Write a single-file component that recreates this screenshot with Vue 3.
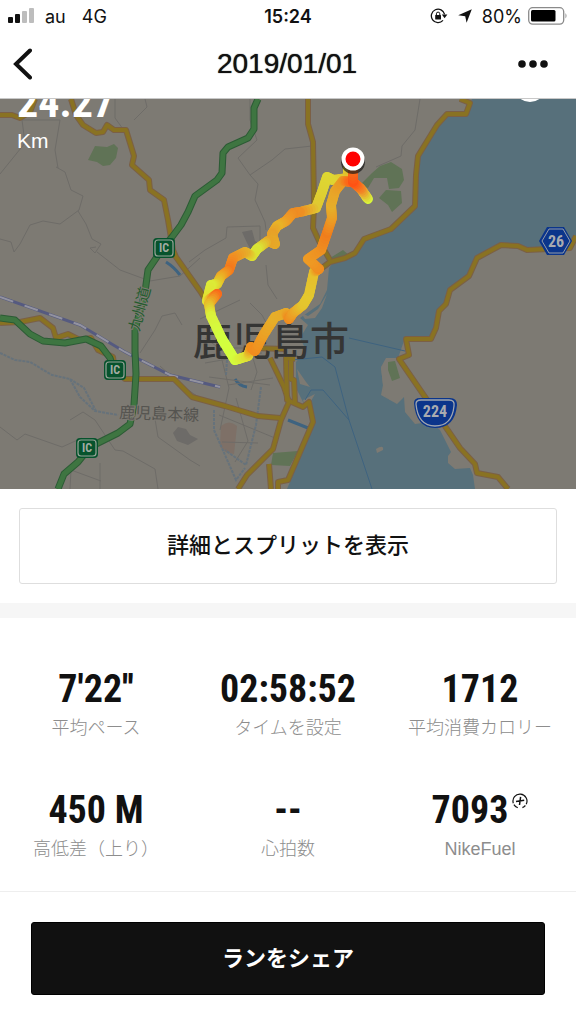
<template>
  <main class="app">
    <header class="header">
      <div class="status">
        <div class="status-left">
          <svg class="signal" viewBox="0 0 26 16" aria-hidden="true">
            <rect x="0" y="9" width="5" height="6" rx="1" fill="#111" />
            <rect x="7" y="6" width="5" height="9" rx="1" fill="#111" />
            <rect x="14" y="3" width="5" height="12" rx="1" fill="#bdbdbd" />
            <rect x="21" y="0" width="5" height="15" rx="1" fill="#bdbdbd" />
          </svg>
          <span>au</span>
          <span class="network">4G</span>
        </div>
        <div class="status-time">15:24</div>
        <div class="status-right">
          <svg class="lock" viewBox="0 0 18 16" aria-hidden="true">
            <path d="M14.6 6.4A6.7 6.7 0 1 0 13 12.4" fill="none" stroke="#111" stroke-width="1.3" />
            <path d="M11.8 6.6h5.6l-2.8 3.6z" fill="#111" />
            <rect x="5.2" y="7" width="5.8" height="4.4" rx="0.5" fill="#111" />
            <path d="M6.4 7.3V5.8a1.7 1.7 0 0 1 3.4 0v1.5" fill="none" stroke="#111" stroke-width="1" />
          </svg>
          <svg class="arrow" viewBox="0 0 14 14" aria-hidden="true">
            <path d="M13.8 0.2 8.6 13.8 7.2 7.2 0.2 6.3z" fill="#111" />
          </svg>
          <span>80%</span>
          <svg class="battery" viewBox="0 0 40 18" aria-hidden="true">
            <rect x="0.7" y="0.7" width="35" height="16.4" rx="4" fill="none" stroke="#8a8a8a" stroke-width="1.3" />
            <rect x="3" y="3" width="24.5" height="11.6" rx="1.5" fill="#000" />
            <path d="M37.5 6q2 2.8 0 5.6z" fill="#8a8a8a" />
          </svg>
        </div>
      </div>
      <nav class="nav">
        <button class="icon-btn" aria-label="戻る">
          <svg viewBox="0 0 20 32" width="20" height="32">
            <path d="M18 2.5 4 16 18 29.5" fill="none" stroke="#111" stroke-width="4" stroke-linecap="round" />
          </svg>
        </button>
        <h1 class="title">2019/01/01</h1>
        <button class="icon-btn icon-btn-right" aria-label="メニュー">
          <svg viewBox="0 0 30 8" width="30" height="8">
            <circle cx="4" cy="4" r="3.8" fill="#111" />
            <circle cx="15" cy="4" r="3.8" fill="#111" />
            <circle cx="26" cy="4" r="3.8" fill="#111" />
          </svg>
        </button>
      </nav>
    </header>

    <section class="map">
      <svg class="map-svg" viewBox="0 99 576 390" preserveAspectRatio="xMidYMid slice">
        <rect x="0" y="99" width="576" height="390" fill="#7d7a73" />

        <!-- parks -->
        <g fill="#607356">
          <path d="M88 160 95 146 107 147 114 144 118 148 116 158 110 165 103 166 97 162z" />
          <path d="M360 185 372 173 380 166 391 162 402 169 404 180 399 188 389 189 387 178 374 178 368 188z" />
          <path d="M379 198 386 190 401 191 402 203 392 212 388 205z" />
          <path d="M273 453 298 451 290 466 271 465z" />
          <path d="M330 258 343 250 350 256 340 262z" />
        </g>
        <path d="M221 426q8-7 16 0l-3 28q-10-1-14-8z" fill="#7e7067" />

        <!-- sea -->
        <path :d="sea" fill="#57707b" />
        <g fill="#7d7a73">
          <path d="M301 313 308 316 318 309 327 294 322 308 315 318 305 319z" />
          <path d="M297 369 306 382 310 387 300 384z" />
          <path d="M381 367 386 358 390 358 390 400 384 395z" />
          <path d="M376 449q8-5 7 1l-6 3z" />
          <path d="M303 400 315 394 311 401 305 407z" />
        </g>
        <path d="M388 362 395 361 400 378 392 381 388 370z" fill="#607356" />
        <g fill="none" stroke="#3e6380" stroke-width="1">
          <path d="M349 338 405 351M305 400 311 390 323 390 349 420 335 367 322 357 292 360M349 420 372 489" />
          <path d="M235 379q4 7 12 8M288 420q10 4 20 8M166 262q8 5 14 13" stroke-width="3" />
        </g>

        <!-- minor roads -->
        <g fill="none" stroke="#6e6c68" stroke-width="1">
          <path d="M0 174 25 143 22 120 60 120M56 167 65 172 71 190 83 196 79 210 60 224 43 221 30 225 20 244 14 252 11 242 0 239" />
          <path d="M78 211 86 224 92 239 101 244 95 253 90 248 96 247M97 252 120 270 150 281 180 276 200 258M60 120 55 150 58 168" />
          <path d="M115 99 115 118 123 129M145 99 147 107 134 120M250 99 250 120 257 140 238 158 250 175 258 184 255 200 265 222 266 230M250 175 272 160 285 149 312 146" />
          <path d="M189 262 205 250 226 238 227 227 260 226 260 245M266 265 268 285 277 299M420 99 415 130 402 146 401 156 376 167" />
          <path d="M140 353 155 330 162 316 175 313 182 325M200 319 240 300M0 427 17 440 25 434 62 447 82 438M70 420 83 412 95 420 115 450 123 451 155 469 158 489M70 489 71 470 101 481" />
          <path d="M155 419 158 437 190 460 200 466M100 463 100 489M160 366 182 386 200 398" />
          <path d="M205 338 219 348 229 388 220 430M219 348 250 348 257 372 251 390M205 363 262 353M209 377 270 385M228 385 273 378M219 415 275 438M222 442 258 443M270 330 262 315 250 303M236 398 248 441 235 462" />
        </g>
        <g fill="#6d6b68">
          <path d="M173 433 178 427 186 429 190 435 198 439 188 445 177 441z" />
          <path d="M242 232 252 230 255 241 262 245 252 252 247 243z" />
        </g>
        <path d="M0 353 15 360 30 362 52 375 70 379 80 397 95 411 118 415M70 379 84 388 96 411M214 410 214 430 236 480 245 468M261 387 256 425 246 465 225 450M226 375 228 345" fill="none" stroke="#66727b" stroke-width="2" stroke-dasharray="3 1" />
        <g fill="none">
          <path :d="railway" stroke="#555a80" stroke-width="3" />
          <path :d="railway" stroke="#9393a0" stroke-width="2" stroke-dasharray="14 12" />
        </g>

        <!-- main roads -->
        <g fill="none" stroke-linejoin="round">
          <path v-for="(d, i) in roads" :key="'e' + i" :d="d" stroke="#7b6046" stroke-width="6" />
          <path v-for="(d, i) in roads" :key="'r' + i" :d="d" stroke="#897222" stroke-width="4" />
          <path v-for="(d, i) in expressways" :key="'x' + i" :d="d" stroke="#2c5b35" stroke-width="7" />
          <path v-for="(d, i) in expressways" :key="'g' + i" :d="d" stroke="#3e7541" stroke-width="5" />
        </g>

        <!-- place names -->
        <g class="place" fill="#555450">
          <text x="193" y="355" font-size="39" font-weight="500" fill="#353534">鹿児島市</text>
          <text x="119" y="418" font-size="16" stroke="#7d7a73" stroke-width="2" paint-order="stroke" transform="rotate(2 119 418)">鹿児島本線</text>
          <text x="139" y="332" font-size="15" fill="#245c2e" stroke="#7d7a73" stroke-width="2" paint-order="stroke" transform="rotate(-75 139 332)">九州道</text>
        </g>

        <!-- interchanges -->
        <g v-for="ic in interchanges" :key="ic.y" class="badge" :transform="`translate(${ic.x} ${ic.y})`">
          <rect x="-11" y="-10" width="22" height="20" rx="4" fill="#07532d" />
          <rect x="-9" y="-8" width="18" height="16" rx="3" fill="#07532d" stroke="#96a397" stroke-width="1.2" />
          <text y="4" font-size="12" fill="#a2aca2">IC</text>
        </g>

        <!-- route shields -->
        <g class="badge">
          <path d="M539 241 547 227h17l8 14-8 14h-17z" fill="#0b358b" />
          <path d="M542 241 549 229h14l7 12-7 12h-14z" fill="none" stroke="#949ca9" />
          <text x="556" y="247" font-size="16" fill="#a8abb0">26</text>
          <path d="M414 403Q414 398 420 398H450Q457 398 457 405Q455 428 435 428Q416 428 414 403z" fill="#0b358b" />
          <path d="M416 404Q416 400 421 400H449Q455 400 454 406Q452 426 435 426Q418 426 416 404z" fill="none" stroke="#a0a6b0" stroke-width="1.3" />
          <text x="435" y="417" font-size="16" fill="#a8abb0">224</text>
        </g>

        <!-- run track, one short line per colour step -->
        <g stroke-width="10" stroke-linecap="round">
          <line
            v-for="(s, i) in track"
            :key="i"
            :x1="s.x1"
            :y1="s.y1"
            :x2="s.x2"
            :y2="s.y2"
            :stroke="s.color"
          />
        </g>
        <ellipse cx="353" cy="162" rx="12" ry="12" fill="#1b1a18" opacity="0.7" />
        <circle cx="353" cy="159" r="11.5" fill="#fff" />
        <circle cx="353" cy="159" r="7.5" fill="#f00" />
      </svg>
      <div class="distance">
        <div class="distance-value">24.27</div>
        <div class="distance-unit">Km</div>
      </div>
      <span class="map-dot"></span>
    </section>

    <section class="details">
      <button class="btn btn-outline">詳細とスプリットを表示</button>
    </section>

    <section class="stats">
      <div v-for="stat in stats" :key="stat.label" class="stat">
        <div class="stat-value">
          {{ stat.value }}
          <svg v-if="stat.fuel" class="fuel" viewBox="0 0 16 16" aria-hidden="true">
            <path d="M5.8 14.7A7 7 0 0 1 1.9 11.6M1.3 10.2A7 7 0 1 1 14.2 11.3M13.4 12.5A7 7 0 0 1 10.4 14.6" fill="none" stroke="#111" stroke-width="1.2" />
            <path d="M8.6 3.8 7.5 12M4 8.4 12.2 7.2" stroke="#111" stroke-width="1.5" />
          </svg>
        </div>
        <div class="stat-label">{{ stat.label }}</div>
      </div>
    </section>

    <footer class="footer">
      <button class="btn btn-primary">ランをシェア</button>
    </footer>
  </main>
</template>

<script setup>
const stats = [
  { value: "7'22''", label: '平均ペース' },
  { value: '02:58:52', label: 'タイムを設定' },
  { value: '1712', label: '平均消費カロリー' },
  { value: '450 M', label: '高低差（上り）' },
  { value: '--', label: '心拍数' },
  { value: '7093', label: 'NikeFuel', fuel: true },
]

const sea =
  'M472 99 466 115 447 115 437 127 418 156 415 175 416 207 391 230 376 236 365 240 356 255 335 260 329 268 327 290 320 304 300 318 308 325 300 338 306 350 296 362 296 388 304 404 313 408 314 425 287 489H475L473 475 470 468 455 469 448 463 448 456 451 452 440 430 430 422 415 424 405 412 404 397 397 404 381 395 383 385 381 368 388 358 398 358 405 338 430 338 436 328 440 312 447 300 448 288 469 277 478 258 500 245 520 247 528 250 560 248 576 236V99z'

const railway = 'M0 297 80 325 125 352 170 375 220 387'

const roads = [
  'M0 115H12L20 118 30 112 35 99',
  'M71 99 76 115 83 125 96 133 103 132 107 125 114 130 126 130 134 156 132 165 149 180 150 190 164 200 168 220 173 250 176 257 200 291 212 310',
  'M308 99V124L313 142 314 205 313 228 319 241 330 260',
  'M460 99 470 103 466 114 447 114 437 125 418 156 416 175 415 206 391 229 364 239 355 253 345 258 330 262 322 268',
  'M576 236 570 248 527 250 518 246 501 245 477 258 469 276 450 290 446 304 439 311 436 328 431 339H406L409 355 399 359 460 448 475 464 477 473 498 477 508 489',
  'M0 323 20 322 40 318 53 328 56 338 68 334 80 340 91 338 98 350 113 357 115 370 125 379H174L192 397 225 406 258 416 280 418',
  'M270 358 284 387 289 402 281 420 273 449 247 475 238 489',
  'M286 357 287 400 303 407 309 402 313 422 288 480 278 482 278 489',
  'M291 357 291 379 294 380 295 403M269 464 271 489',
  'M250 348 285 349M285 358 295 359',
]

const expressways = [
  'M258 99 254 108 254 129 248 138 228 147 223 153 222 173 217 180 195 196 188 212 181 225 172 237 163 248 148 270 145 292 135 330V351L136 374 134 405 130 424 118 433 90 447 78 462 64 474 58 489',
  'M0 318 15 320 30 334 43 341 65 343 86 339 101 346 110 358 114 370',
]

const interchanges = [
  { x: 164, y: 248 },
  { x: 115, y: 370 },
  { x: 87, y: 448 },
]

// [x, y, r, g, b]
const spur = [
  [368, 199, 216, 245, 60],
  [361, 189, 240, 140, 40],
  [353, 182, 255, 82, 20],
  [353, 164, 240, 120, 30],
]

const loop = [
  [348, 168, 220, 215, 50],
  [348, 178, 226, 190, 45],
  [333, 180, 224, 210, 50],
  [327, 177, 222, 215, 50],
  [322, 192, 222, 210, 50],
  [316, 208, 224, 200, 50],
  [300, 212, 238, 145, 35],
  [293, 213, 238, 140, 35],
  [286, 221, 238, 155, 38],
  [277, 226, 232, 180, 40],
  [272, 234, 232, 160, 40],
  [275, 244, 230, 170, 40],
  [268, 241, 232, 165, 40],
  [257, 249, 216, 230, 55],
  [252, 256, 220, 225, 50],
  [245, 252, 230, 175, 42],
  [233, 258, 240, 145, 35],
  [229, 270, 245, 120, 28],
  [221, 276, 238, 165, 35],
  [217, 284, 226, 205, 45],
  [211, 285, 220, 235, 55],
  [207, 301, 226, 225, 50],
  [217, 294, 250, 105, 25],
  [209, 304, 232, 185, 42],
  [211, 316, 218, 240, 58],
  [222, 339, 210, 255, 64],
  [235, 360, 212, 252, 60],
  [248, 356, 225, 220, 52],
  [251, 347, 240, 145, 30],
  [255, 351, 242, 140, 30],
  [264, 334, 236, 160, 36],
  [275, 317, 230, 175, 42],
  [286, 313, 232, 170, 40],
  [289, 319, 240, 140, 32],
  [293, 313, 236, 160, 38],
  [303, 305, 228, 195, 46],
  [309, 295, 228, 200, 46],
  [314, 272, 230, 190, 44],
  [319, 269, 240, 140, 32],
  [308, 259, 238, 155, 36],
  [321, 250, 238, 145, 34],
  [327, 233, 240, 125, 28],
  [332, 218, 236, 155, 36],
  [331, 205, 230, 175, 42],
  [335, 191, 232, 165, 40],
  [343, 181, 234, 150, 36],
  [352, 182, 255, 95, 22],
]

const STEPS = 6

function buildTrack(points) {
  const result = []
  for (let i = 0; i < points.length - 1; i++) {
    const a = points[i]
    const b = points[i + 1]
    const at = (t) => a.map((v, k) => v + (b[k] - v) * t)
    for (let n = 0; n < STEPS; n++) {
      const p = at(n / STEPS)
      const q = at((n + 1) / STEPS)
      result.push({
        x1: p[0],
        y1: p[1],
        x2: q[0],
        y2: q[1],
        color: `rgb(${p.slice(2).map(Math.round).join(',')})`,
      })
    }
  }
  return result
}

const track = [...buildTrack(loop), ...buildTrack(spur)]
</script>

<style>
body {
  background: #fff;
}
</style>

<style scoped>
.app {
  display: flex;
  flex-direction: column;
  min-height: 100vh;
  background: #fff;
  color: #111;
  font-family: 'Liberation Sans', 'Noto Sans CJK JP', sans-serif;
}

.header {
  border-bottom: 1px solid #c8c8c8;
}

.status {
  display: grid;
  grid-template-columns: 1fr auto 1fr;
  align-items: center;
  height: 32px;
  padding: 0 8px;
  font-family: Inter, sans-serif;
  font-size: 18px;
}

.status-left,
.status-right {
  display: flex;
  align-items: center;
}

.signal {
  width: 26px;
  height: 16px;
  margin-right: 11px;
}

.network {
  margin-left: 16px;
}

.status-time {
  font-weight: 600;
}

.status-right {
  justify-content: flex-end;
}

.lock {
  width: 18px;
  height: 16px;
  margin-right: 10px;
}

.arrow {
  width: 14px;
  height: 14px;
  margin-right: 10px;
}

.battery {
  width: 40px;
  height: 18px;
  margin-left: 6px;
}

.nav {
  display: grid;
  grid-template-columns: 1fr auto 1fr;
  align-items: center;
  height: 64px;
  padding: 0 28px 2px 12px;
}

.icon-btn {
  display: flex;
  justify-self: start;
  padding: 0;
  border: 0;
  background: none;
  cursor: pointer;
}

.icon-btn-right {
  justify-self: end;
}

.title {
  margin: 0;
  padding-left: 14px;
  font-size: 28px;
  font-weight: 400;
  line-height: 32px;
  text-shadow: 0 0 1px #111;
}

.map {
  position: relative;
  overflow: hidden;
}

.map-svg {
  display: block;
  width: 100%;
}

.place {
  font-family: 'Noto Sans CJK JP', sans-serif;
}

.badge {
  font-family: 'Roboto Condensed', 'Liberation Sans', sans-serif;
  font-weight: 700;
  text-anchor: middle;
}

.distance {
  position: absolute;
  top: -20px;
  left: 17px;
  color: #fff;
}

.distance-value {
  font-family: 'Roboto Condensed', sans-serif;
  font-size: 42px;
  font-weight: 700;
  line-height: 48px;
}

.distance-unit {
  font-size: 21px;
  line-height: 28px;
}

.map-dot {
  position: absolute;
  top: -29px;
  right: 30px;
  width: 32px;
  height: 32px;
  border-radius: 50%;
  background: #fff;
}

.details {
  padding: 19px;
  border-bottom: 15px solid #f6f6f6;
}

.btn {
  display: block;
  width: 100%;
  border-radius: 3px;
  font-family: 'Noto Sans CJK JP', sans-serif;
  font-size: 22px;
  line-height: 32px;
  cursor: pointer;
}

.btn-outline {
  padding: 18px 20px 24px;
  border: 1px solid #dedede;
  background: #fff;
  color: #111;
  font-weight: 500;
}

.btn-primary {
  padding: 17px 20px 22px;
  border: 1px solid #000;
  background: #111;
  color: #fff;
  font-weight: 700;
}

.stats {
  display: grid;
  grid-template-columns: repeat(3, 1fr);
  row-gap: 43px;
  padding: 47px 0 27px;
  text-align: center;
}

.stat-value {
  display: flex;
  justify-content: center;
  font-family: 'Roboto Condensed', sans-serif;
  font-size: 38px;
  font-weight: 700;
  line-height: 48px;
}

.fuel {
  width: 16px;
  height: 16px;
  margin: 7px 0 0 4px;
}

.stat-label {
  color: #8d8d8d;
  font-family: 'Liberation Sans', 'Noto Sans CJK JP', sans-serif;
  font-size: 18px;
  font-weight: 300;
  line-height: 30px;
}

.footer {
  padding: 30px 31px;
  border-top: 1px solid #eee;
}
</style>
